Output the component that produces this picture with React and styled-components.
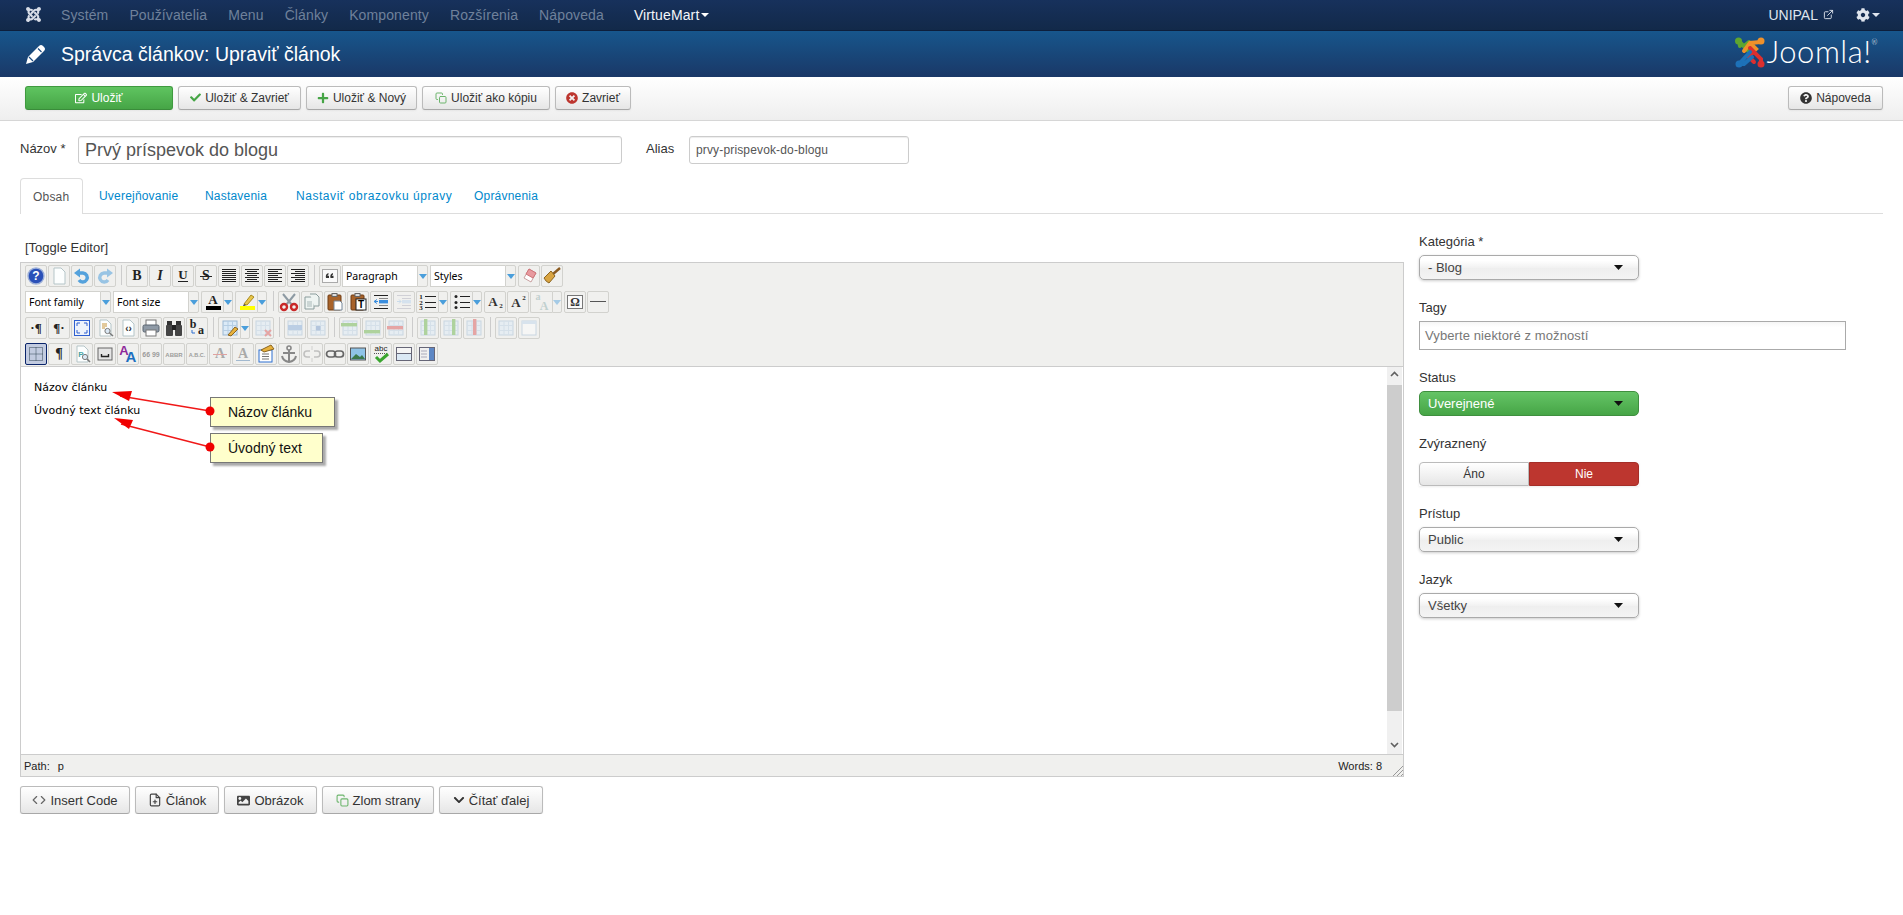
import React from "react";
import styled, { createGlobalStyle } from "styled-components";
import {
  FaJoomla,
  FaCog,
  FaCheck,
  FaPlus,
  FaRegEdit,
  FaTimesCircle,
  FaQuestionCircle,
  FaImage,
  FaChevronDown,
} from "react-icons/fa";
import { FiExternalLink, FiCopy, FiFilePlus, FiCode } from "react-icons/fi";

const GlobalStyle = createGlobalStyle`
  html, body { margin: 0; padding: 0; background: #fff; }
  body { font-family: "Liberation Sans", Arial, sans-serif; font-size: 13px; color: #333; }
  * { box-sizing: border-box; }
`;

// top bars
const Navbar = styled.div`
  height: 31px;
  display: flex;
  align-items: center;
  padding: 0 23px 1px 25px;
  background: linear-gradient(#17315c, #122949);
  border-bottom: 1px solid #0d1f3c;
`;
const NavBrand = styled.div`
  color: #d9dee8;
  width: 36px;
  display: flex;
  font-size: 17px;
`;
const NavItem = styled.span`
  color: ${(p) => (p.$on ? "#f4f6fa" : "#6f819b")};
  font-size: 14px;
  letter-spacing: 0.12px;
  margin-right: ${(p) => p.$gap || 21}px;
  display: inline-flex;
  align-items: center;
`;
const Caret = styled.i`
  display: inline-block;
  margin-left: 2px;
  border-left: 4px solid transparent;
  border-right: 4px solid transparent;
  border-top: 4px solid ${(p) => p.$color || "#fff"};
`;
const NavRight = styled.div`
  margin-left: auto;
  display: flex;
  align-items: center;
  color: #dfe5ee;
  font-size: 14px;
  svg { margin-left: 5px; }
`;
const GearIcon = styled(FaCog)`
  && { margin-left: 22px; }
`;
const Header = styled.div`
  height: 46px;
  display: flex;
  align-items: center;
  justify-content: space-between;
  padding: 0 25px;
  background: linear-gradient(#17568c, #1a3867);
`;
const PageTitle = styled.h1`
  margin: 0;
  font-size: 19.5px;
  font-weight: normal;
  color: #fff;
  display: flex;
  align-items: center;
  gap: 15px;
`;
const Logo = styled.div`
  display: flex;
  align-items: center;
  gap: 2px;
  margin-top: -3px;
`;
const LogoWord = styled.span`
  font-family: "Lato", "Open Sans", sans-serif;
  font-weight: 300;
  font-size: 31px;
  line-height: 30px;
  margin-bottom: 3px;
  color: #fff;
  letter-spacing: 0.5px;
  sup { font-size: 7px; line-height: 0; vertical-align: 18px; }
`;
const Subhead = styled.div`
  height: 44px;
  display: flex;
  align-items: center;
  gap: 5px;
  padding: 0 20px 2px 25px;
  background: linear-gradient(#fff, #eee);
  border-bottom: 1px solid #d6d6d6;
`;
const Btn = styled.div`
  height: ${(p) => (p.$big ? 28 : 24)}px;
  width: ${(p) => p.$w}px;
  display: flex;
  align-items: center;
  justify-content: center;
  gap: 4px;
  font-size: ${(p) => (p.$big ? 13 : 12)}px;
  color: ${(p) => (p.$green ? "#fff" : "#333")};
  border: 1px solid ${(p) => (p.$green ? "#3f9a3f" : "#bbb")};
  border-bottom-color: ${(p) => (p.$green ? "#3a8c3a" : "#a8a8a8")};
  border-radius: 3px;
  background: ${(p) =>
    p.$green
      ? "linear-gradient(#5fc460, #46a546)"
      : "linear-gradient(#fff, #e6e6e6)"};
  box-shadow: 0 1px 2px rgba(0, 0, 0, 0.05);
  ${(p) => p.$right && "margin-left: auto;"}
`;

// title row and tabs
const Main = styled.div`
  padding: 15px 20px 0;
`;
const TitleRow = styled.div`
  display: flex;
  align-items: center;
  height: 28px;
`;
const RowLabel = styled.label`
  font-size: 13px;
  width: ${(p) => p.$w}px;
  margin-top: -3px;
`;
const TextInput = styled.div`
  width: ${(p) => p.$w}px;
  height: 28px;
  margin-right: ${(p) => p.$mr || 0}px;
  border: 1px solid #ccc;
  border-radius: 3px;
  padding: 0 6px;
  display: flex;
  align-items: center;
  color: #555;
  font-size: ${(p) => p.$size}px;
  letter-spacing: ${(p) => p.$track || 0}px;
  box-shadow: inset 0 1px 1px rgba(0, 0, 0, 0.075);
`;
const Tabs = styled.div`
  display: flex;
  height: 36px;
  margin-top: 14px;
  border-bottom: 1px solid #ddd;
`;
const Tab = styled.div`
  height: ${(p) => (p.$active ? 36 : 35)}px;
  width: ${(p) => p.$w}px;
  padding-left: ${(p) => p.$pl || 16}px;
  display: flex;
  align-items: center;
  font-size: 12px;
  letter-spacing: ${(p) => p.$track || 0.2}px;
  color: ${(p) => (p.$active ? "#555" : "#0088cc")};
  ${(p) =>
    p.$active &&
    "background:#fff;border:1px solid #ddd;border-bottom:0;border-radius:4px 4px 0 0;"}
`;

// editor column and sidebar
const Columns = styled.div`
  display: grid;
  grid-template-columns: 1384px 1fr;
  column-gap: 15px;
  margin-top: 18px;
`;
const Toggle = styled.div`
  height: 18px;
  line-height: 20px;
  margin: 6px 0 6px 5px;
  font-size: 13px;
  color: #333;
`;
const Editor = styled.div`
  height: 515px;
  display: flex;
  flex-direction: column;
  border: 1px solid #ccc;
  background: #fff;
`;
const Toolbar = styled.div`
  height: 104px;
  flex: none;
  background: #f0f0ee;
  border-bottom: 1px solid #ccc;
  padding: 2px 0 0 4px;
  display: flex;
  flex-direction: column;
  gap: 4px;
`;
const ToolRow = styled.div`
  height: 22px;
  display: flex;
  gap: 1px;
`;
const ToolBtn = styled.div`
  width: ${(p) => p.$w || 22}px;
  height: 22px;
  flex: none;
  display: flex;
  align-items: center;
  justify-content: center;
  border: 1px solid ${(p) => (p.$active ? "#0a246a" : "#d2d2ce")};
  border-radius: 2px;
  background: ${(p) => (p.$active ? "#c2cbe0" : "#f0f0ee")};
  ${(p) => p.$side === "l" && "border-right:0;border-radius:2px 0 0 2px;"}
  ${(p) => p.$side === "r" && "border-radius:0 2px 2px 0;"}
  svg { opacity: ${(p) => p.$dim || 1}; }
`;
const ToolSep = styled.div`
  width: 1px;
  height: 20px;
  margin: 0 3px 0 4px;
  background: #ccc;
`;
const ToolSelect = styled.div`
  width: 75px;
  height: 22px;
  flex: none;
  display: flex;
  align-items: center;
  padding-left: 3px;
  background: #fff;
  border: 1px solid #d2d2ce;
  border-right: 0;
  font-family: "Noto Sans", sans-serif;
  font-size: 10.5px;
  color: #000;
`;
const Pair = styled.div`
  display: flex;
  flex: none;
  margin-right: ${(p) => p.$mr || 0}px;
`;
const DownTri = styled.i`
  border-left: 4px solid transparent;
  border-right: 4px solid transparent;
  border-top: 5px solid #4a9edb;
  opacity: ${(p) => p.$dim || 1};
`;
const EditArea = styled.div`
  flex: 1;
  display: flex;
  min-height: 0;
`;
const Page = styled.div`
  flex: 1;
  position: relative;
  padding: 14px 0 0 13px;
  font-family: "DejaVu Sans", Verdana, sans-serif;
  font-size: 11px;
  line-height: 14px;
  color: #000;
  p { margin: 0 0 9px; }
`;
const Note = styled.div`
  position: absolute;
  left: 189px;
  top: ${(p) => p.$top}px;
  width: ${(p) => p.$w}px;
  height: 30px;
  padding-left: 17px;
  display: flex;
  align-items: center;
  background: #ffffcc;
  border: 1px solid #777;
  box-shadow: 3px 3px 2px #aaa;
  font-family: "Liberation Sans", Arial, sans-serif;
  font-size: 14px;
  color: #111;
`;
const Arrows = styled.svg`
  position: absolute;
  left: 0;
  top: 1px;
  overflow: visible;
`;
const ScrollBar = styled.div`
  width: 15px;
  flex: none;
  margin-right: 1px;
  background: #f0f0f0;
  display: flex;
  flex-direction: column;
  align-items: center;
`;
const ScrollEnd = styled.div`
  height: ${(p) => p.$h}px;
  padding-top: ${(p) => p.$pt}px;
  flex: none;
  color: #606060;
  display: flex;
  justify-content: center;
`;
const ScrollThumb = styled.div`
  width: 15px;
  height: 326px;
  flex: none;
  background: #cdcdcd;
`;
const StatusBar = styled.div`
  height: 22px;
  flex: none;
  display: flex;
  align-items: center;
  position: relative;
  padding: 0 21px 0 3px;
  background: #f0f0ee;
  border-top: 1px solid #ccc;
  font-size: 11px;
  color: #222;
`;
const PathTag = styled.span`
  margin-left: 8px;
`;
const Words = styled.span`
  margin-left: auto;
`;
const Grip = styled.svg`
  position: absolute;
  right: 0;
  bottom: 0;
`;
const BelowButtons = styled.div`
  display: flex;
  gap: 5px;
  margin-top: 9px;
`;
const Field = styled.div`
  margin-bottom: 18px;
`;
const FieldLabel = styled.div`
  height: 18px;
  line-height: 20px;
  margin-bottom: ${(p) => p.$mb || 5}px;
  font-size: 13px;
  color: #333;
`;
const Chosen = styled.div`
  width: 220px;
  height: 25px;
  display: flex;
  align-items: center;
  justify-content: space-between;
  padding: 0 12px 0 8px;
  font-size: 13px;
  border-radius: 5px;
  color: ${(p) => (p.$green ? "#fff" : "#444")};
  border: 1px solid ${(p) => (p.$green ? "#3f8f3f" : "#aaa")};
  background: ${(p) =>
    p.$green
      ? "linear-gradient(#65c466, #46a546)"
      : "linear-gradient(#fff 20%, #f2f2f2 50%, #eee 52%, #f4f4f4)"};
  box-shadow: ${(p) => (p.$green ? "none" : "0 1px 3px rgba(0,0,0,.2)")};
`;
const TagInput = styled.div`
  width: 427px;
  height: 29px;
  display: flex;
  align-items: center;
  padding-left: 5px;
  border: 1px solid #aaa;
  font-size: 13px;
  letter-spacing: 0.1px;
  color: #777;
  background: linear-gradient(#f6f6f6, #fff 20%);
`;
const Switch = styled.div`
  width: 220px;
  height: 24px;
  display: flex;
  font-size: 12px;
  box-shadow: 0 1px 2px rgba(0, 0, 0, 0.08);
`;
const SwitchPart = styled.div`
  flex: 1;
  display: flex;
  align-items: center;
  justify-content: center;
  color: ${(p) => (p.$on ? "#fff" : "#333")};
  background: ${(p) =>
    p.$on ? "#bd362f" : "linear-gradient(#fff, #e6e6e6)"};
  border: 1px solid ${(p) => (p.$on ? "#a52e28" : "#bbb")};
  border-radius: ${(p) => (p.$on ? "0 4px 4px 0" : "4px 0 0 4px")};
`;

// small drawings
const JoomlaMark = () => (
  <svg width="30" height="31" viewBox="0 0 30 31" fill="none" strokeWidth="4" strokeLinecap="round">
    <path d="M4 4 L14 15 M4 4 L5 9 M9 9 L14 5" stroke="#5fa52f" />
    <circle cx="3.5" cy="4" r="3.5" fill="#5fa52f" />
    <path d="M26 5 L15 6 L9 14 M15 6 L21 12 L13 19" stroke="#f0912a" />
    <circle cx="26" cy="4" r="3.5" fill="#f0912a" />
    <path d="M26 27 L26 22 L15 11 M19 25 L13 19 L19 15" stroke="#dc2f2f" />
    <circle cx="26" cy="27" r="3.5" fill="#dc2f2f" />
    <path d="M4 27 L15 15 M4 27 L9 27 L17 20" stroke="#1d71b8" />
    <circle cx="4" cy="27" r="3.5" fill="#1d71b8" />
  </svg>
);

const Pencil = () => (
  <svg width="21" height="21" viewBox="0 0 21 21">
    <path d="M1 20 L3 13 L14 2 Q16 0 18 2 L19 3 Q21 5 19 7 L8 18 Z" fill="#fff" />
    <path d="M4 13 L8 17 M13 4.5 L16.5 8" stroke="#1a4a80" strokeWidth="1.2" />
  </svg>
);

const SelectArrow = () => (
  <svg width="12" height="6" viewBox="0 0 12 6">
    <path d="M0 0 H9 L4.5 5 Z" fill="#111" />
  </svg>
);

const Svg = ({ children }) => (
  <svg width="20" height="20" viewBox="0 0 20 20" fill="none">
    {children}
  </svg>
);

const lines = (rows, color = "#222") => (
  <path
    d={rows.map(([x, y, w]) => `M${x} ${y}.5h${w}`).join("")}
    stroke={color}
    strokeWidth="1"
  />
);

const Letter = ({ t, f = "Liberation Serif", s = 13, w = "bold", c = "#222", y = 14, st, x = 10 }) => (
  <text x={x} y={y} textAnchor="middle" fontFamily={f} fontSize={s} fontWeight={w} fontStyle={st} fill={c}>
    {t}
  </text>
);

const pageShape = (
  <path d="M5 2h7l4 4v12H5z" fill="#fcfefe" stroke="#b5c5c8" />
);

const tableShape = (
  <>
    <rect x="3" y="3" width="14" height="14" fill="#dbeaf7" stroke="#9bb8d3" />
    <path d="M3 7.5h14M3 12.5h14M8 3v14M12.5 3v14" stroke="#b5cde3" />
  </>
);

const TOOL_ICONS = {
  help: (
    <>
      <circle cx="10" cy="10" r="8" fill="#2a50b8" stroke="#9db0d8" strokeWidth="1.4" />
      <Letter t="?" f="Liberation Sans" s={12} c="#fff" y={14} />
    </>
  ),
  page: pageShape,
  undo: (
    <>
      <path d="M6 7 h5 a4.5 4.5 0 1 1 -4 7" stroke="#2f8fd8" strokeWidth="3.4" />
      <path d="M2 7 L8 2.5 V11.5 Z" fill="#2f8fd8" />
    </>
  ),
  redo: (
    <>
      <path d="M14 7 h-5 a4.5 4.5 0 1 0 4 7" stroke="#2f8fd8" strokeWidth="3.4" />
      <path d="M18 7 L12 2.5 V11.5 Z" fill="#2f8fd8" />
    </>
  ),
  bold: <Letter t="B" s={14} />,
  italic: <Letter t="I" s={14} st="italic" />,
  under: (
    <>
      <Letter t="U" s={13} y={13} />
      <path d="M5 15.5h10" stroke="#222" />
    </>
  ),
  strike: (
    <>
      <Letter t="S" s={14} />
      <path d="M4 10.5h12" stroke="#222" />
    </>
  ),
  justify: lines([[3, 3, 14], [3, 5, 14], [3, 7, 14], [3, 9, 14], [3, 11, 14], [3, 13, 14], [3, 15, 14]]),
  center: lines([[3, 3, 14], [5, 5, 10], [3, 7, 14], [5, 9, 10], [3, 11, 14], [5, 13, 10], [3, 15, 14]]),
  left: lines([[3, 3, 14], [3, 5, 10], [3, 7, 14], [3, 9, 10], [3, 11, 14], [3, 13, 10], [3, 15, 14]]),
  right: lines([[3, 3, 14], [7, 5, 10], [3, 7, 14], [7, 9, 10], [3, 11, 14], [7, 13, 10], [3, 15, 14]]),
  quote: (
    <>
      <rect x="2.5" y="3.5" width="15" height="13" fill="#fafafa" stroke="#aaa" />
      <path d="M6 12 Q5 8 8.5 7 V8.5 Q7.5 9 7.5 9.8 H9 V12 Z M10.5 12 Q9.5 8 13 7 V8.5 Q12 9 12 9.8 H13.5 V12 Z" fill="#333" />
    </>
  ),
  eraser: (
    <>
      <path d="M10 3 L17 7 L12 16 L5 12 Z" fill="#fff" stroke="#c9a0a0" />
      <path d="M10 3 L17 7 L14 12 L7 8 Z" fill="#e89a9f" stroke="#cf7479" />
    </>
  ),
  brush: (
    <>
      <path d="M11 8 L18 2" stroke="#8a5a20" strokeWidth="2.4" />
      <path d="M2 12 L9 5 L13 10 L7 17 Q4 16 2 12 Z" fill="#d9a441" stroke="#8a6420" />
    </>
  ),
  fore: (
    <>
      <Letter t="A" s={13} y={12} />
      <rect x="3" y="14" width="15" height="4" fill="#000" />
    </>
  ),
  hilite: (
    <>
      <path d="M7 12 L14 3 L17 5 L10 13 Z" fill="#e8c64a" stroke="#a88a20" />
      <path d="M7 12 L6 14 L9 13.5" fill="#333" />
      <rect x="3" y="14" width="15" height="4" fill="#ffff00" />
    </>
  ),
  cut: (
    <>
      <path d="M4 2 L13 13 M16 2 L7 13" stroke="#8d9aa3" strokeWidth="2" />
      <circle cx="5" cy="15" r="3" stroke="#c92828" strokeWidth="2.4" />
      <circle cx="15" cy="15" r="3" stroke="#c92828" strokeWidth="2.4" />
    </>
  ),
  copy: (
    <>
      <path d="M3 5h7l2 2v10H3z" fill="#eef4f2" stroke="#8a9c9c" />
      <path d="M8 2h6l3 3v9h-5" fill="#eef4f2" stroke="#8a9c9c" />
      <path d="M5 10h5M5 12h5M5 14h5" stroke="#a9b8b8" />
    </>
  ),
  paste: (
    <>
      <rect x="3" y="3" width="13" height="15" rx="1" fill="#a8632a" stroke="#6e3d15" />
      <rect x="7" y="1.5" width="5" height="3" fill="#ddd" stroke="#666" />
      <path d="M9 9h6l2 2v7H9z" fill="#fff" stroke="#789" />
    </>
  ),
  pastetext: (
    <>
      <rect x="3" y="3" width="13" height="15" rx="1" fill="#a8632a" stroke="#6e3d15" />
      <rect x="7" y="1.5" width="5" height="3" fill="#ddd" stroke="#666" />
      <rect x="8" y="7" width="10" height="11" fill="#fff" stroke="#222" />
      <Letter t="T" f="Liberation Sans" s={10} c="#000" x={13} y={16} />
    </>
  ),
  outdent: (
    <>
      {lines([[3, 3, 14], [3, 16, 14]])}
      {lines([[8, 6, 9], [8, 13, 9]], "#888")}
      <rect x="8" y="8" width="9" height="3.4" fill="#3b8ede" />
      <path d="M7 9.5 L3 9.5 M3 9.5 L6 7.5 M3 9.5 L6 11.5" stroke="#3b8ede" />
    </>
  ),
  indent: (
    <>
      {lines([[3, 3, 14], [3, 16, 14]], "#aab")}
      {lines([[8, 6, 9], [8, 13, 9]], "#aab")}
      <rect x="8" y="8" width="9" height="3.4" fill="#b5d2ee" />
      <path d="M3 9.5 H7 M7 9.5 L5 7.5 M7 9.5 L5 11.5" stroke="#9cc2e6" />
    </>
  ),
  numlist: (
    <>
      <Letter t="1" s={7} x={3} y={7} />
      <Letter t="2" s={7} x={3} y={12.5} />
      <Letter t="3" s={7} x={3} y={18} />
      {lines([[7, 4, 11], [7, 10, 11], [7, 15, 11]])}
    </>
  ),
  bullist: (
    <>
      <circle cx="4" cy="4.5" r="1.5" fill="#222" />
      <circle cx="4" cy="10.5" r="1.5" fill="#222" />
      <circle cx="4" cy="15.5" r="1.5" fill="#222" />
      {lines([[8, 4, 10], [8, 10, 10], [8, 15, 10]])}
    </>
  ),
  sub: (
    <>
      <Letter t="A" s={13} x={8} y={14} c="#333" />
      <Letter t="2" s={7} x={16} y={16} c="#333" />
    </>
  ),
  sup: (
    <>
      <Letter t="A" s={13} x={8} y={15} c="#333" />
      <Letter t="2" s={7} x={16} y={8} c="#333" />
    </>
  ),
  sizer: (
    <>
      <Letter t="a" s={10} x={6} y={8} c="#8aa" />
      <Letter t="A" s={12} x={12} y={18} c="#8aa" />
    </>
  ),
  omega: (
    <>
      <rect x="2.5" y="3.5" width="15" height="13" fill="#fafafa" stroke="#777" />
      <Letter t="Ω" s={12} c="#333" y={14} />
    </>
  ),
  hr: lines([[2, 9, 16]], "#555"),
  ltr: <Letter t="·¶" s={13} c="#222" y={14} />,
  rtl: <Letter t="¶·" s={13} c="#222" y={14} />,
  full: (
    <>
      <rect x="2.5" y="2.5" width="15" height="15" fill="#eef3fb" stroke="#2d5fd0" />
      <path d="M5 8V5h3M12 5h3v3M15 12v3h-3M8 15H5v-3" stroke="#2d5fd0" />
    </>
  ),
  preview: (
    <>
      {pageShape}
      <path d="M7 6h5M7 8h5M7 10h3" stroke="#c9963a" />
      <circle cx="12.5" cy="13" r="2.6" fill="#dbe9f5" stroke="#7a7a7a" />
      <path d="M14.5 15 L18 18" stroke="#7a7a7a" strokeWidth="1.6" />
    </>
  ),
  code: (
    <>
      {pageShape}
      <Letter t="‹›" f="Liberation Sans" s={10} c="#333" y={14} x={10.5} />
    </>
  ),
  print: (
    <>
      <rect x="5" y="2" width="10" height="6" fill="#fff" stroke="#777" />
      <rect x="2" y="7" width="16" height="7" rx="1.5" fill="#8f9aa6" stroke="#59636e" />
      <rect x="5" y="12" width="10" height="6" fill="#fff" stroke="#777" />
    </>
  ),
  find: (
    <>
      <rect x="3" y="3" width="5" height="5" fill="#333" />
      <rect x="12" y="3" width="5" height="5" fill="#333" />
      <rect x="2" y="7" width="7" height="11" rx="1" fill="#444" />
      <rect x="11" y="7" width="7" height="11" rx="1" fill="#444" />
      <rect x="8" y="7" width="4" height="5" fill="#222" />
    </>
  ),
  replace: (
    <>
      <Letter t="b" s={12} x={6} y={10} />
      <Letter t="a" s={12} x={14} y={16} />
      <path d="M5 12v3h3" stroke="#2d6fd0" />
    </>
  ),
  table: (
    <>
      {tableShape}
      <path d="M8 17 L15 9 L18 11 L11 18 Z" fill="#e8b23c" stroke="#8a6420" />
    </>
  ),
  tabledel: (
    <>
      {tableShape}
      <path d="M12 12 L18 18 M18 12 L12 18" stroke="#d84a4a" strokeWidth="2" />
    </>
  ),
  rowprops: (
    <>
      {tableShape}
      <rect x="3" y="7" width="14" height="5" fill="#7da7d8" />
    </>
  ),
  cellprops: (
    <>
      {tableShape}
      <rect x="8" y="8" width="4.5" height="4.5" fill="#6b93c9" />
    </>
  ),
  rowup: (
    <>
      {tableShape}
      <rect x="1" y="5" width="16" height="3.4" fill="#5fae3c" />
    </>
  ),
  rowdown: (
    <>
      {tableShape}
      <rect x="1" y="12" width="16" height="3.4" fill="#5fae3c" />
    </>
  ),
  rowdel: (
    <>
      {tableShape}
      <rect x="1" y="8" width="16" height="3.4" fill="#d94c4c" />
    </>
  ),
  colleft: (
    <>
      {tableShape}
      <rect x="6" y="1" width="3.4" height="16" fill="#5fae3c" />
    </>
  ),
  colright: (
    <>
      {tableShape}
      <rect x="11" y="1" width="3.4" height="16" fill="#5fae3c" />
    </>
  ),
  coldel: (
    <>
      {tableShape}
      <rect x="9" y="1" width="3.4" height="16" fill="#d94c4c" />
    </>
  ),
  split: tableShape,
  merge: (
    <>
      <rect x="3" y="3" width="14" height="14" fill="#fff" stroke="#9bb8d3" />
      <rect x="3" y="3" width="14" height="3" fill="#bcd5ec" />
    </>
  ),
  aid: (
    <path
      d="M3.5 3.5h13v13h-13zM3.5 10h13M10 3.5v13"
      stroke="#345"
      strokeDasharray="1 1"
    />
  ),
  para: <Letter t="¶" s={14} c="#222" y={14} />,
  previewp: (
    <>
      {pageShape}
      <Letter t="P" f="Liberation Sans" s={8} c="#4aa3a3" x={9} y={13} />
      <circle cx="13" cy="13" r="2.6" fill="#dbe9f5" stroke="#7a7a7a" />
      <path d="M15 15 L18 18" stroke="#7a7a7a" strokeWidth="1.6" />
    </>
  ),
  nbsp: (
    <>
      <rect x="3" y="4" width="14" height="12" fill="#e5e5e5" stroke="#666" />
      <path d="M6.5 10v2.5h7V10" stroke="#222" strokeWidth="1.4" />
    </>
  ),
  styles: (
    <>
      <Letter t="A" f="Liberation Sans" s={13} x={6} y={11} c="#8e2a9a" />
      <Letter t="A" f="Liberation Sans" s={15} x={13} y={18} c="#1d6fc0" />
    </>
  ),
  cite: <Letter t="66 99" f="Liberation Sans" s={7} c="#333" y={13} />,
  abbr: <Letter t="ABBR" f="Liberation Sans" s={6} c="#333" y={13} />,
  acronym: <Letter t="A.B.C." f="Liberation Sans" s={5.5} c="#333" y={13} />,
  del: (
    <>
      <Letter t="A" s={14} c="#555" />
      <path d="M3 10.5h14" stroke="#c44" />
    </>
  ),
  ins: (
    <>
      <Letter t="A" s={14} c="#555" />
      <path d="M3 16.5h14" stroke="#47a" />
    </>
  ),
  attribs: (
    <>
      <rect x="3" y="6" width="13" height="12" fill="#fff" stroke="#2d6fd0" />
      <path d="M6 10h7M6 12.5h7M6 15h7" stroke="#777" />
      <path d="M5 6 L15 1 L18 5 L8 8 Z" fill="#e8b23c" stroke="#8a6420" />
    </>
  ),
  anchor: (
    <>
      <circle cx="10" cy="4" r="2" stroke="#888" strokeWidth="1.6" />
      <path d="M10 6v12M4 9h12M3 12 Q4 17 10 18 Q16 17 17 12" stroke="#888" strokeWidth="2" />
    </>
  ),
  unlink: (
    <>
      <path d="M2 10 a3 3 0 0 1 3-3 h3 M18 10 a3 3 0 0 1-3 3 h-3 M2 10 a3 3 0 0 0 3 3 h3 M18 10 a3 3 0 0 0-3-3 h-3" stroke="#888" strokeWidth="1.6" />
      <path d="M10 2v4M10 14v4" stroke="#aaa" />
    </>
  ),
  link: (
    <>
      <rect x="1.5" y="7" width="9" height="6" rx="3" stroke="#666" strokeWidth="1.7" />
      <rect x="9.5" y="7" width="9" height="6" rx="3" stroke="#666" strokeWidth="1.7" />
    </>
  ),
  image: (
    <>
      <rect x="2.5" y="4" width="15" height="12" fill="#8fc4e8" stroke="#555" />
      <path d="M3 15 L8 10 L12 13 L14 11 L17 15 Z" fill="#3c7a4c" />
    </>
  ),
  spell: (
    <>
      <Letter t="abc" f="Liberation Sans" s={8} w="normal" c="#222" y={7} />
      <path d="M3 9.5h14" stroke="#555" strokeDasharray="1 1" />
      <path d="M5 13 L9 17 L17 10" stroke="#3aa52f" strokeWidth="3" />
    </>
  ),
  band: (
    <>
      <rect x="2.5" y="3.5" width="15" height="13" fill="#dbe9f5" stroke="#667" />
      <rect x="3" y="4" width="14" height="5" fill="#f5f5f5" />
      <path d="M3 9.5h14" stroke="#667" />
    </>
  ),
  layout: (
    <>
      <rect x="2.5" y="3.5" width="15" height="13" fill="#f0f0f0" stroke="#667" />
      <rect x="12" y="4" width="5" height="12" fill="#5d87c4" />
      <path d="M4 7h6M4 10h6M4 13h6" stroke="#aab" />
    </>
  ),
};

const Tool = ({ i, dim, active, side }) => (
  <ToolBtn $dim={dim} $active={active} $side={side}>
    <Svg>{TOOL_ICONS[i]}</Svg>
  </ToolBtn>
);

const ToolSplit = ({ i, dim }) => (
  <Pair $mr={1}>
    <Tool i={i} dim={dim} side="l" />
    <ToolBtn $w={10} $side="r">
      <DownTri $dim={dim} />
    </ToolBtn>
  </Pair>
);

const ToolDrop = ({ label }) => (
  <Pair $mr={1}>
    <ToolSelect>{label}</ToolSelect>
    <ToolBtn $w={11} $side="r">
      <DownTri />
    </ToolBtn>
  </Pair>
);

// ":d" greys an icon out, ":s" is the half-grey undo, ":a" is the pressed state
const FLAGS = { d: 0.45, s: 0.8 };

const ROWS = [
  ["help", "page", "undo:s", "redo:d", "|", "bold", "italic", "under", "strike", "justify", "center", "left", "right", "|", "quote", "#Paragraph", "#Styles", "eraser", "brush"],
  ["#Font family", "#Font size", "+fore", "+hilite", "|", "cut", "copy", "paste", "pastetext", "outdent", "indent:d", "+numlist", "+bullist", "sub", "sup", "+sizer:d", "omega", "hr"],
  ["ltr", "rtl", "full", "preview", "code", "print", "find", "replace", "|", "+table", "tabledel:d", "|", "rowprops:d", "cellprops:d", "|", "rowup:d", "rowdown:d", "rowdel:d", "|", "colleft:d", "colright:d", "coldel:d", "|", "split:d", "merge:d"],
  ["aid:a", "para", "previewp", "nbsp", "styles", "cite:d", "abbr:d", "acronym:d", "del:d", "ins:d", "attribs", "anchor", "unlink:d", "link", "image", "spell", "band", "layout"],
];

const renderTool = (raw, key) => {
  if (raw === "|") return <ToolSep key={key} />;
  if (raw[0] === "#") return <ToolDrop key={key} label={raw.slice(1)} />;
  const split = raw[0] === "+";
  const [name, flag] = (split ? raw.slice(1) : raw).split(":");
  if (split) return <ToolSplit key={key} i={name} dim={FLAGS[flag]} />;
  return <Tool key={key} i={name} dim={FLAGS[flag]} active={flag === "a"} />;
};

const NAV = ["Systém", "Používatelia", "Menu", "Články", "Komponenty", "Rozšírenia"];

const Field2 = ({ label, value, green }) => (
  <Field>
    <FieldLabel>{label}</FieldLabel>
    <Chosen $green={green}>
      {value}
      <SelectArrow />
    </Chosen>
  </Field>
);

export default function App() {
  return (
    <>
      <GlobalStyle />
      <Navbar>
        <NavBrand>
          <FaJoomla />
        </NavBrand>
        {NAV.map((n) => (
          <NavItem key={n}>{n}</NavItem>
        ))}
        <NavItem $gap={30}>Nápoveda</NavItem>
        <NavItem $on>
          VirtueMart
          <Caret />
        </NavItem>
        <NavRight>
          UNIPAL
          <FiExternalLink size={11} />
          <GearIcon size={14} />
          <Caret $color="#dfe5ee" />
        </NavRight>
      </Navbar>
      <Header>
        <PageTitle>
          <Pencil />
          Správca článkov: Upraviť článok
        </PageTitle>
        <Logo>
          <JoomlaMark />
          <LogoWord>
            Joomla!<sup>®</sup>
          </LogoWord>
        </Logo>
      </Header>
      <Subhead>
        <Btn $w={148} $green>
          <FaRegEdit size={12} color="#fff" /> Uložiť
        </Btn>
        <Btn $w={123}>
          <FaCheck size={11} color="#46a546" /> Uložiť &amp; Zavrieť
        </Btn>
        <Btn $w={111}>
          <FaPlus size={12} color="#46a546" /> Uložiť &amp; Nový
        </Btn>
        <Btn $w={128}>
          <FiCopy size={12} color="#6cb56c" /> Uložiť ako kópiu
        </Btn>
        <Btn $w={76}>
          <FaTimesCircle size={12} color="#bd362f" /> Zavrieť
        </Btn>
        <Btn $w={95} $right>
          <FaQuestionCircle size={12} color="#333" /> Nápoveda
        </Btn>
      </Subhead>
      <Main>
        <TitleRow>
          <RowLabel $w={58}>Názov *</RowLabel>
          <TextInput $w={544} $mr={24} $size={18}>
            Prvý príspevok do blogu
          </TextInput>
          <RowLabel $w={43}>Alias</RowLabel>
          <TextInput $w={220} $size={12} $track={0.15}>
            prvy-prispevok-do-blogu
          </TextInput>
        </TitleRow>
        <Tabs>
          <Tab $active $w={63} $pl={12}>Obsah</Tab>
          <Tab $w={106}>Uverejňovanie</Tab>
          <Tab $w={91}>Nastavenia</Tab>
          <Tab $w={178} $track={0.55}>Nastaviť obrazovku úpravy</Tab>
          <Tab $w={90}>Oprávnenia</Tab>
        </Tabs>
        <Columns>
          <div>
            <Toggle>[Toggle Editor]</Toggle>
            <Editor>
              <Toolbar>
                {ROWS.map((row, r) => (
                  <ToolRow key={r}>
                    {row.map((t, k) => renderTool(t, k))}
                  </ToolRow>
                ))}
              </Toolbar>
              <EditArea>
                <Page>
                  <p>Názov článku</p>
                  <p>Úvodný text článku</p>
                  <Note $top={30} $w={125}>Názov článku</Note>
                  <Note $top={66} $w={113}>Úvodný text</Note>
                  <Arrows width="200" height="100" viewBox="0 0 200 100">
                    <path d="M189 43 L99 28 M189 79 L100 56" stroke="#f01818" strokeWidth="1.4" />
                    <path d="M91 24 L111 23 L108 33 Z" fill="#f00000" />
                    <path d="M93 50 L112 52 L108 61 Z" fill="#f00000" />
                    <circle cx="189" cy="43" r="4.5" fill="#f00000" />
                    <circle cx="189" cy="79" r="4.5" fill="#f00000" />
                  </Arrows>
                </Page>
                <ScrollBar>
                  <ScrollEnd $h={18} $pt={4}>
                    <svg width="9" height="6" viewBox="0 0 9 6">
                      <path d="M1 5 L4.5 1.5 L8 5" stroke="#606060" strokeWidth="1.6" fill="none" />
                    </svg>
                  </ScrollEnd>
                  <ScrollThumb />
                  <ScrollEnd $h={43} $pt={31}>
                    <svg width="9" height="6" viewBox="0 0 9 6">
                      <path d="M1 1 L4.5 4.5 L8 1" stroke="#606060" strokeWidth="1.6" fill="none" />
                    </svg>
                  </ScrollEnd>
                </ScrollBar>
              </EditArea>
              <StatusBar>
                Path:
                <PathTag>p</PathTag>
                <Words>Words: 8</Words>
                <Grip width="11" height="11" viewBox="0 0 11 11">
                  <path d="M1 11 L11 1 M5 11 L11 5 M9 11 L11 9" stroke="#999" />
                </Grip>
              </StatusBar>
            </Editor>
            <BelowButtons>
              <Btn $big $w={110}>
                <FiCode size={14} color="#666" /> Insert Code
              </Btn>
              <Btn $big $w={84}>
                <FiFilePlus size={14} color="#444" /> Článok
              </Btn>
              <Btn $big $w={93}>
                <FaImage size={13} color="#444" /> Obrázok
              </Btn>
              <Btn $big $w={112}>
                <FiCopy size={13} color="#6cb56c" /> Zlom strany
              </Btn>
              <Btn $big $w={104}>
                <FaChevronDown size={12} color="#333" /> Čítať ďalej
              </Btn>
            </BelowButtons>
          </div>
          <div>
            <Field2 label="Kategória *" value="- Blog" />
            <Field>
              <FieldLabel>Tagy</FieldLabel>
              <TagInput>Vyberte niektoré z možností</TagInput>
            </Field>
            <Field2 label="Status" value="Uverejnené" green />
            <Field>
              <FieldLabel $mb={10}>Zvýraznený</FieldLabel>
              <Switch>
                <SwitchPart>Áno</SwitchPart>
                <SwitchPart $on>Nie</SwitchPart>
              </Switch>
            </Field>
            <Field2 label="Prístup" value="Public" />
            <Field2 label="Jazyk" value="Všetky" />
          </div>
        </Columns>
      </Main>
    </>
  );
}
